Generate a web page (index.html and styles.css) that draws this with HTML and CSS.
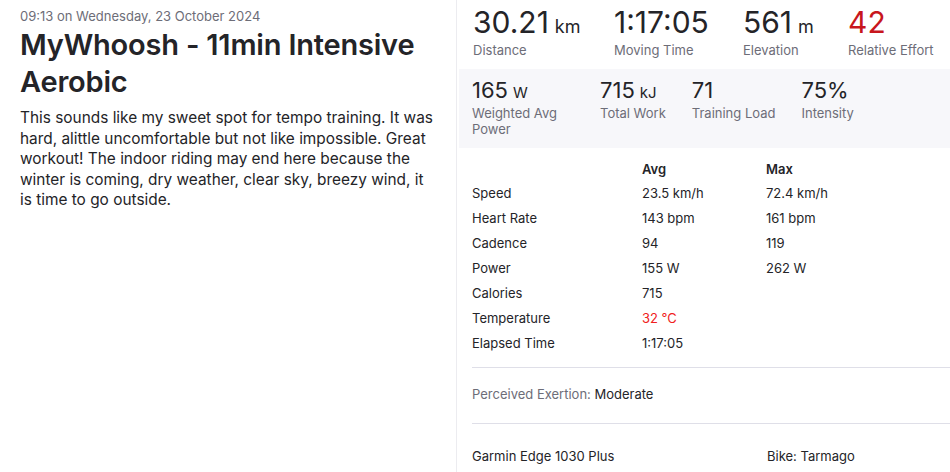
FILE: index.html
```html
<!DOCTYPE html>
<html>
<head>
    <title>MyWhoosh - 11min Intensive Aerobic</title>
    <link rel="stylesheet" href="styles.css">
</head>
<body>
    <div class="page">
        <div class="details">
            <time class="date">09:13 on Wednesday, 23 October 2024</time>
            <h1 class="title">MyWhoosh - 11min Intensive Aerobic</h1>
            <p class="desc">This sounds like my sweet spot for tempo training. It was hard, alittle uncomfortable but not like impossible. Great workout! The indoor riding may end here because the winter is coming, dry weather, clear sky, breezy wind, it is time to go outside.</p>
        </div>
        <div class="stats">
            <ul class="inline-stats">
                <li class="distance">
                    <strong>30.21<abbr>km</abbr></strong>
                    <div class="label">Distance</div>
                </li>
                <li class="moving">
                    <strong>1:17:05</strong>
                    <div class="label">Moving Time</div>
                </li>
                <li class="elevation">
                    <strong>561<abbr>m</abbr></strong>
                    <div class="label">Elevation</div>
                </li>
                <li>
                    <strong class="effort">42</strong>
                    <div class="label">Relative Effort</div>
                </li>
            </ul>
            <ul class="secondary-stats">
                <li class="wap">
                    <strong>165<abbr>W</abbr></strong>
                    <div class="label">Weighted Avg Power</div>
                </li>
                <li>
                    <strong>715<abbr>kJ</abbr></strong>
                    <div class="label">Total Work</div>
                </li>
                <li>
                    <strong>71</strong>
                    <div class="label">Training Load</div>
                </li>
                <li>
                    <strong>75%</strong>
                    <div class="label">Intensity</div>
                </li>
            </ul>
            <table class="more-stats">
                <thead>
                    <tr><th></th><th>Avg</th><th>Max</th></tr>
                </thead>
                <tbody>
                    <tr><td>Speed</td><td>23.5 km/h</td><td>72.4 km/h</td></tr>
                    <tr><td>Heart Rate</td><td>143 bpm</td><td>161 bpm</td></tr>
                    <tr><td>Cadence</td><td>94</td><td>119</td></tr>
                    <tr><td>Power</td><td>155 W</td><td>262 W</td></tr>
                    <tr><td>Calories</td><td>715</td><td></td></tr>
                    <tr><td>Temperature</td><td class="hot">32 ℃</td><td></td></tr>
                    <tr><td>Elapsed Time</td><td>1:17:05</td><td></td></tr>
                </tbody>
            </table>
            <div class="exertion">
                <span class="label">Perceived Exertion:</span> Moderate
            </div>
            <div class="gear">
                <span class="device">Garmin Edge 1030 Plus</span>
                <span class="bike">Bike: Tarmago</span>
            </div>
        </div>
    </div>
</body>
</html>
```

FILE: styles.css
```css
body {
    margin: 0;
    padding: 0;
    font-family: Inter, "Noto Sans", sans-serif;
    color: #242428;
    background-color: white;
}
.page {
    display: flex;
    height: 472px;
    overflow: hidden;
}
.details {
    width: 436px;
    padding: 8px 0 0 20px;
    border-right: 1px solid #ececf0;
    box-sizing: content-box;
}
.date {
    display: block;
    font-size: 13px;
    color: #6d6d78;
    line-height: 16px;
}
.title {
    margin: 2px 0 0;
    font-size: 29px;
    font-weight: 600;
    line-height: 37px;
    letter-spacing: -0.2px;
    width: 420px;
}
.desc {
    margin: 8px 0 0;
    font-size: 15.4px;
    line-height: 20.5px;
    width: 414px;
}
.stats {
    flex: 1;
    padding-left: 2px;
}
.stats ul {
    list-style: none;
    margin: 0;
    display: flex;
}
.stats strong {
    display: block;
    font-weight: 400;
}
.label {
    color: #6d6d78;
    font-size: 13px;
}
abbr {
    margin-left: 6px;
    font-size: 18px;
    line-height: 1;
}
.inline-stats {
    padding: 4px 0 0 14px;
    height: 65px;
}
.inline-stats .distance {
    width: 141px;
}
.inline-stats .moving {
    width: 129px;
}
.inline-stats .elevation {
    width: 105px;
}
.inline-stats strong {
    font-size: 30px;
    line-height: 36px;
}
.inline-stats .label {
    line-height: 16px;
    margin-top: 2px;
}
.effort {
    color: #c8161d;
}
.secondary-stats {
    background-color: #f7f7fa;
    padding: 8px 0 0 13px;
    gap: 26px;
    height: 71px;
}
.secondary-stats strong {
    font-size: 22px;
    line-height: 26px;
}
.secondary-stats abbr {
    font-size: 15px;
    margin-left: 5px;
}
.secondary-stats .label {
    line-height: 16px;
    margin-top: 2px;
}
.secondary-stats .wap {
    width: 102px;
}
.more-stats {
    margin: 10px 0 0 13px;
    border-collapse: collapse;
    font-size: 13px;
}
.more-stats th {
    text-align: left;
    font-weight: 600;
    height: 22px;
    padding: 0;
}
.more-stats td {
    height: 25px;
    padding: 0;
}
.more-stats td:first-child,
.more-stats th:first-child {
    width: 170px;
}
.more-stats td:nth-child(2),
.more-stats th:nth-child(2) {
    width: 124px;
}
.hot {
    color: #f02020;
}
.exertion {
    margin: 12px 0 0 13px;
    border-top: 1px solid #dfdfe8;
    border-bottom: 1px solid #dfdfe8;
    padding: 17px 0 20px;
    font-size: 13px;
    line-height: 18px;
}
.gear {
    display: flex;
    margin-left: 13px;
    padding-top: 24px;
    font-size: 13px;
}
.device {
    width: 295px;
}
```
